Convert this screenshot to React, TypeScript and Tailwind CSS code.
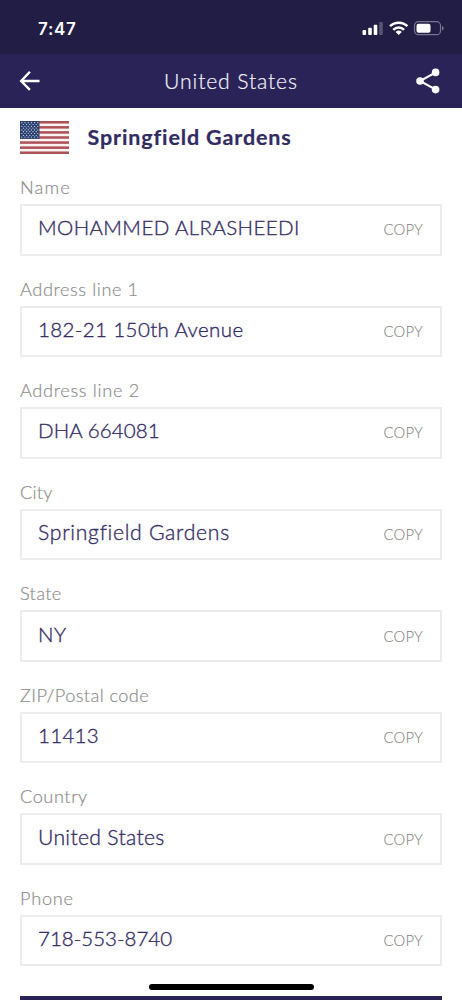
type Field = { label: string; value: string; labelClass: string; valueClass: string };

const fields: Field[] = [
  { label: "Name", value: "MOHAMMED ALRASHEEDI", labelClass: "tracking-[1.1px]", valueClass: "text-[20.5px] tracking-[0.4px]" },
  { label: "Address line 1", value: "182-21 150th Avenue", labelClass: "tracking-[0.58px]", valueClass: "text-[20.5px] tracking-[0.39px]" },
  { label: "Address line 2", value: "DHA 664081", labelClass: "tracking-[0.66px]", valueClass: "text-[20.5px] tracking-[0.1px]" },
  { label: "City", value: "Springfield Gardens", labelClass: "tracking-[0.2px]", valueClass: "text-[21.2px] tracking-[0.7px]" },
  { label: "State", value: "NY", labelClass: "tracking-[0.3px]", valueClass: "text-[20.5px] tracking-[0.6px]" },
  { label: "ZIP/Postal code", value: "11413", labelClass: "tracking-[0.4px]", valueClass: "text-[20.5px] tracking-[0.3px]" },
  { label: "Country", value: "United States", labelClass: "tracking-[0.55px]", valueClass: "text-[21.2px] tracking-[0.3px]" },
  { label: "Phone", value: "718-553-8740", labelClass: "tracking-[0.75px]", valueClass: "text-[20.5px] tracking-[0px]" },
];

function StatusBar() {
  return (
    <div className="flex h-[54px] shrink-0 items-start justify-between bg-[#211d44] pl-[38px] pr-[17px] text-white">
      <span className="mt-[17px] font-['Inter',sans-serif] text-[17px] font-semibold leading-6 tracking-[0.7px]">7:47</span>
      <div className="mt-[20px] flex">
        <svg width="22" height="16" viewBox="0 0 22 16" fill="white">
          <rect x="0.5" y="10" width="3.6" height="5" rx="1" />
          <rect x="6.2" y="7.8" width="3.6" height="7.2" rx="1" />
          <rect x="11.7" y="4.8" width="3.6" height="10.2" rx="1" />
          <rect x="17.2" y="2" width="3.6" height="13" rx="1" opacity="0.25" />
        </svg>
        <svg className="ml-[5px]" width="20" height="16" viewBox="0 0 20 16" fill="none" stroke="white" strokeWidth="2.5">
          <path d="M1 6.2a12.4 12.4 0 0 1 17.4 0" />
          <path d="M4.3 9.8a7.6 7.6 0 0 1 10.8 0" />
          <path d="M9.7 15.1 6.6 12a4.5 4.5 0 0 1 6.2 0z" fill="white" stroke="none" />
        </svg>
        <svg className="ml-[4px]" width="32" height="16" viewBox="0 0 32 16">
          <rect x="1.5" y="1.7" width="26" height="13" rx="3.8" fill="none" stroke="#77748f" strokeWidth="1.2" />
          <rect x="3.5" y="3.7" width="14" height="9" rx="2" fill="white" />
          <path d="M29 6v4.4q1.7-.5 1.7-2.2T29 6z" fill="#77748f" />
        </svg>
      </div>
    </div>
  );
}

function Header() {
  return (
    <header className="flex h-[54px] shrink-0 items-center justify-between bg-[#2a2358] pl-[18px] pr-[21px]">
      <svg width="22" height="22" viewBox="0 0 22 22" fill="none" stroke="white" strokeWidth="2.4">
        <path d="M11.9 1.8 3.2 11l8.7 8.8M3.2 11h18.3" />
      </svg>
      <h1 className="ml-[7px] font-['Lato',sans-serif] text-[21.2px] font-light leading-[26px] tracking-[0.85px] text-[#f4f3fa] [-webkit-text-stroke:0.2px_#f4f3fa]">
        United States
      </h1>
      <svg width="26" height="26" viewBox="0 0 26 26" fill="white">
        <path d="M20.8 4.4 5 13l15.8 8.6" fill="none" stroke="white" strokeWidth="2.1" />
        <circle cx="20.6" cy="4.4" r="3.8" />
        <circle cx="5" cy="13" r="3.8" />
        <circle cx="20.6" cy="21.6" r="3.8" />
      </svg>
    </header>
  );
}

function Flag() {
  return (
    <svg width="49" height="33" viewBox="0 0 49 33">
      <rect width="49" height="33" fill="#fbf3f2" />
      {[0, 2, 4, 6, 8, 10, 12].map((i) => (
        <rect key={i} y={(i * 33) / 13} width="49" height={33 / 13} fill="#ad5358" />
      ))}
      <rect width="19.5" height="17.8" fill="#2a4172" />
      {[0, 1, 2, 3, 4, 5, 6, 7, 8].map((row) =>
        [0, 1, 2, 3, 4, 5].slice(row % 2).map((col) => (
          <circle key={`${row}-${col}`} cx={1.8 + col * 3.2 - (row % 2) * 1.6} cy={1.7 + row * 1.8} r="0.6" fill="#d5deea" />
        )),
      )}
    </svg>
  );
}

function AddressField({ field }: { field: Field }) {
  return (
    <div className="h-[101.57px]">
      <div className={`h-[28px] text-[18.2px] font-light leading-[23px] text-[#8d8d8d] [-webkit-text-stroke:0.2px_#8d8d8d] ${field.labelClass}`}>
        {field.label}
      </div>
      <div className="flex h-[51.5px] items-center justify-between border-2 border-[#ececec] pl-[16px] pr-[17px]">
        <span className={`-mt-[5px] font-light leading-[26px] text-[#352d66] [-webkit-text-stroke:0.35px_#352d66] ${field.valueClass}`}>
          {field.value}
        </span>
        <button className="-mt-px text-[14.8px] font-light leading-5 tracking-[0.19px] text-[#868686] [-webkit-text-stroke:0.1px_#868686]">COPY</button>
      </div>
    </div>
  );
}

export default function App() {
  return (
    <div className="relative flex h-[1000px] w-[462px] flex-col overflow-hidden bg-white font-['Lato',sans-serif]">
      <StatusBar />
      <Header />
      <main className="shrink-0 px-[20px] pt-[13px]">
        <div className="flex h-[55px] items-start">
          <Flag />
          <h2 className="ml-[18.5px] mt-[3px] text-[21.5px] font-bold leading-[26px] tracking-[0.87px] text-[#322b64] [-webkit-text-stroke:0.2px_#322b64]">Springfield Gardens</h2>
        </div>
        {fields.map((field) => (
          <AddressField key={field.label} field={field} />
        ))}
        <div className="mt-[7px] h-[50px] bg-[#2a2358]" />
      </main>
      <div className="absolute bottom-[10px] left-[149px] h-[6px] w-[165px] rounded-full bg-black" />
    </div>
  );
}
